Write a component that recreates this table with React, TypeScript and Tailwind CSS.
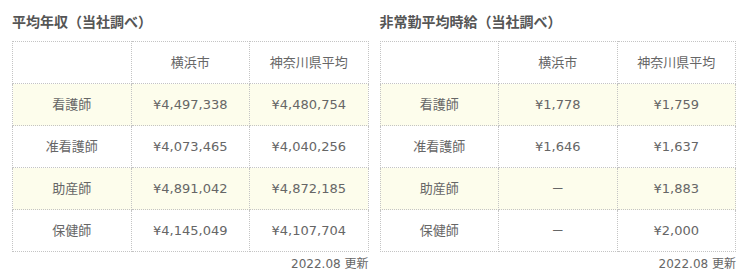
const salary = [
  { name: "看護師", city: "¥4,497,338", pref: "¥4,480,754" },
  { name: "准看護師", city: "¥4,073,465", pref: "¥4,040,256" },
  { name: "助産師", city: "¥4,891,042", pref: "¥4,872,185" },
  { name: "保健師", city: "¥4,145,049", pref: "¥4,107,704" },
];

const hourly = [
  { name: "看護師", city: "¥1,778", pref: "¥1,759" },
  { name: "准看護師", city: "¥1,646", pref: "¥1,637" },
  { name: "助産師", city: "－", pref: "¥1,883" },
  { name: "保健師", city: "－", pref: "¥2,000" },
];

interface PanelProps {
  title: string;
  rows: { name: string; city: string; pref: string }[];
}

function Panel({ title, rows }: PanelProps) {
  const cell = "border border-dotted border-[#c4c4c4] h-[42px] text-center align-middle";
  return (
    <div className="flex-1 min-w-0">
      <h2 className="text-[14px] font-bold leading-[20px] h-[20px] mb-[9px] text-[#555]">{title}</h2>
      <table className="w-full border-collapse table-fixed text-[13px] text-[#666]">
        <tbody>
          <tr>
            <td className={cell}></td>
            <td className={cell}>横浜市</td>
            <td className={cell}>神奈川県平均</td>
          </tr>
          {rows.map((r, i) => (
            <tr key={r.name} className={i % 2 === 0 ? "bg-[#fdfdec]" : "bg-white"}>
              <td className={cell}>{r.name}</td>
              <td className={cell}>{r.city}</td>
              <td className={cell}>{r.pref}</td>
            </tr>
          ))}
        </tbody>
      </table>
      <p className="text-right text-[12px] leading-[18px] mt-[3px] text-[#666]">2022.08 更新</p>
    </div>
  );
}

export default function App() {
  return (
    <div
      className="w-[748px] h-[275px] bg-white flex gap-[11px] px-3 pt-[12px]"
      style={{ fontFamily: '"DejaVu Sans", "Noto Sans CJK JP", sans-serif' }}
    >
      <Panel title="平均年収（当社調べ）" rows={salary} />
      <Panel title="非常勤平均時給（当社調べ）" rows={hourly} />
    </div>
  );
}
